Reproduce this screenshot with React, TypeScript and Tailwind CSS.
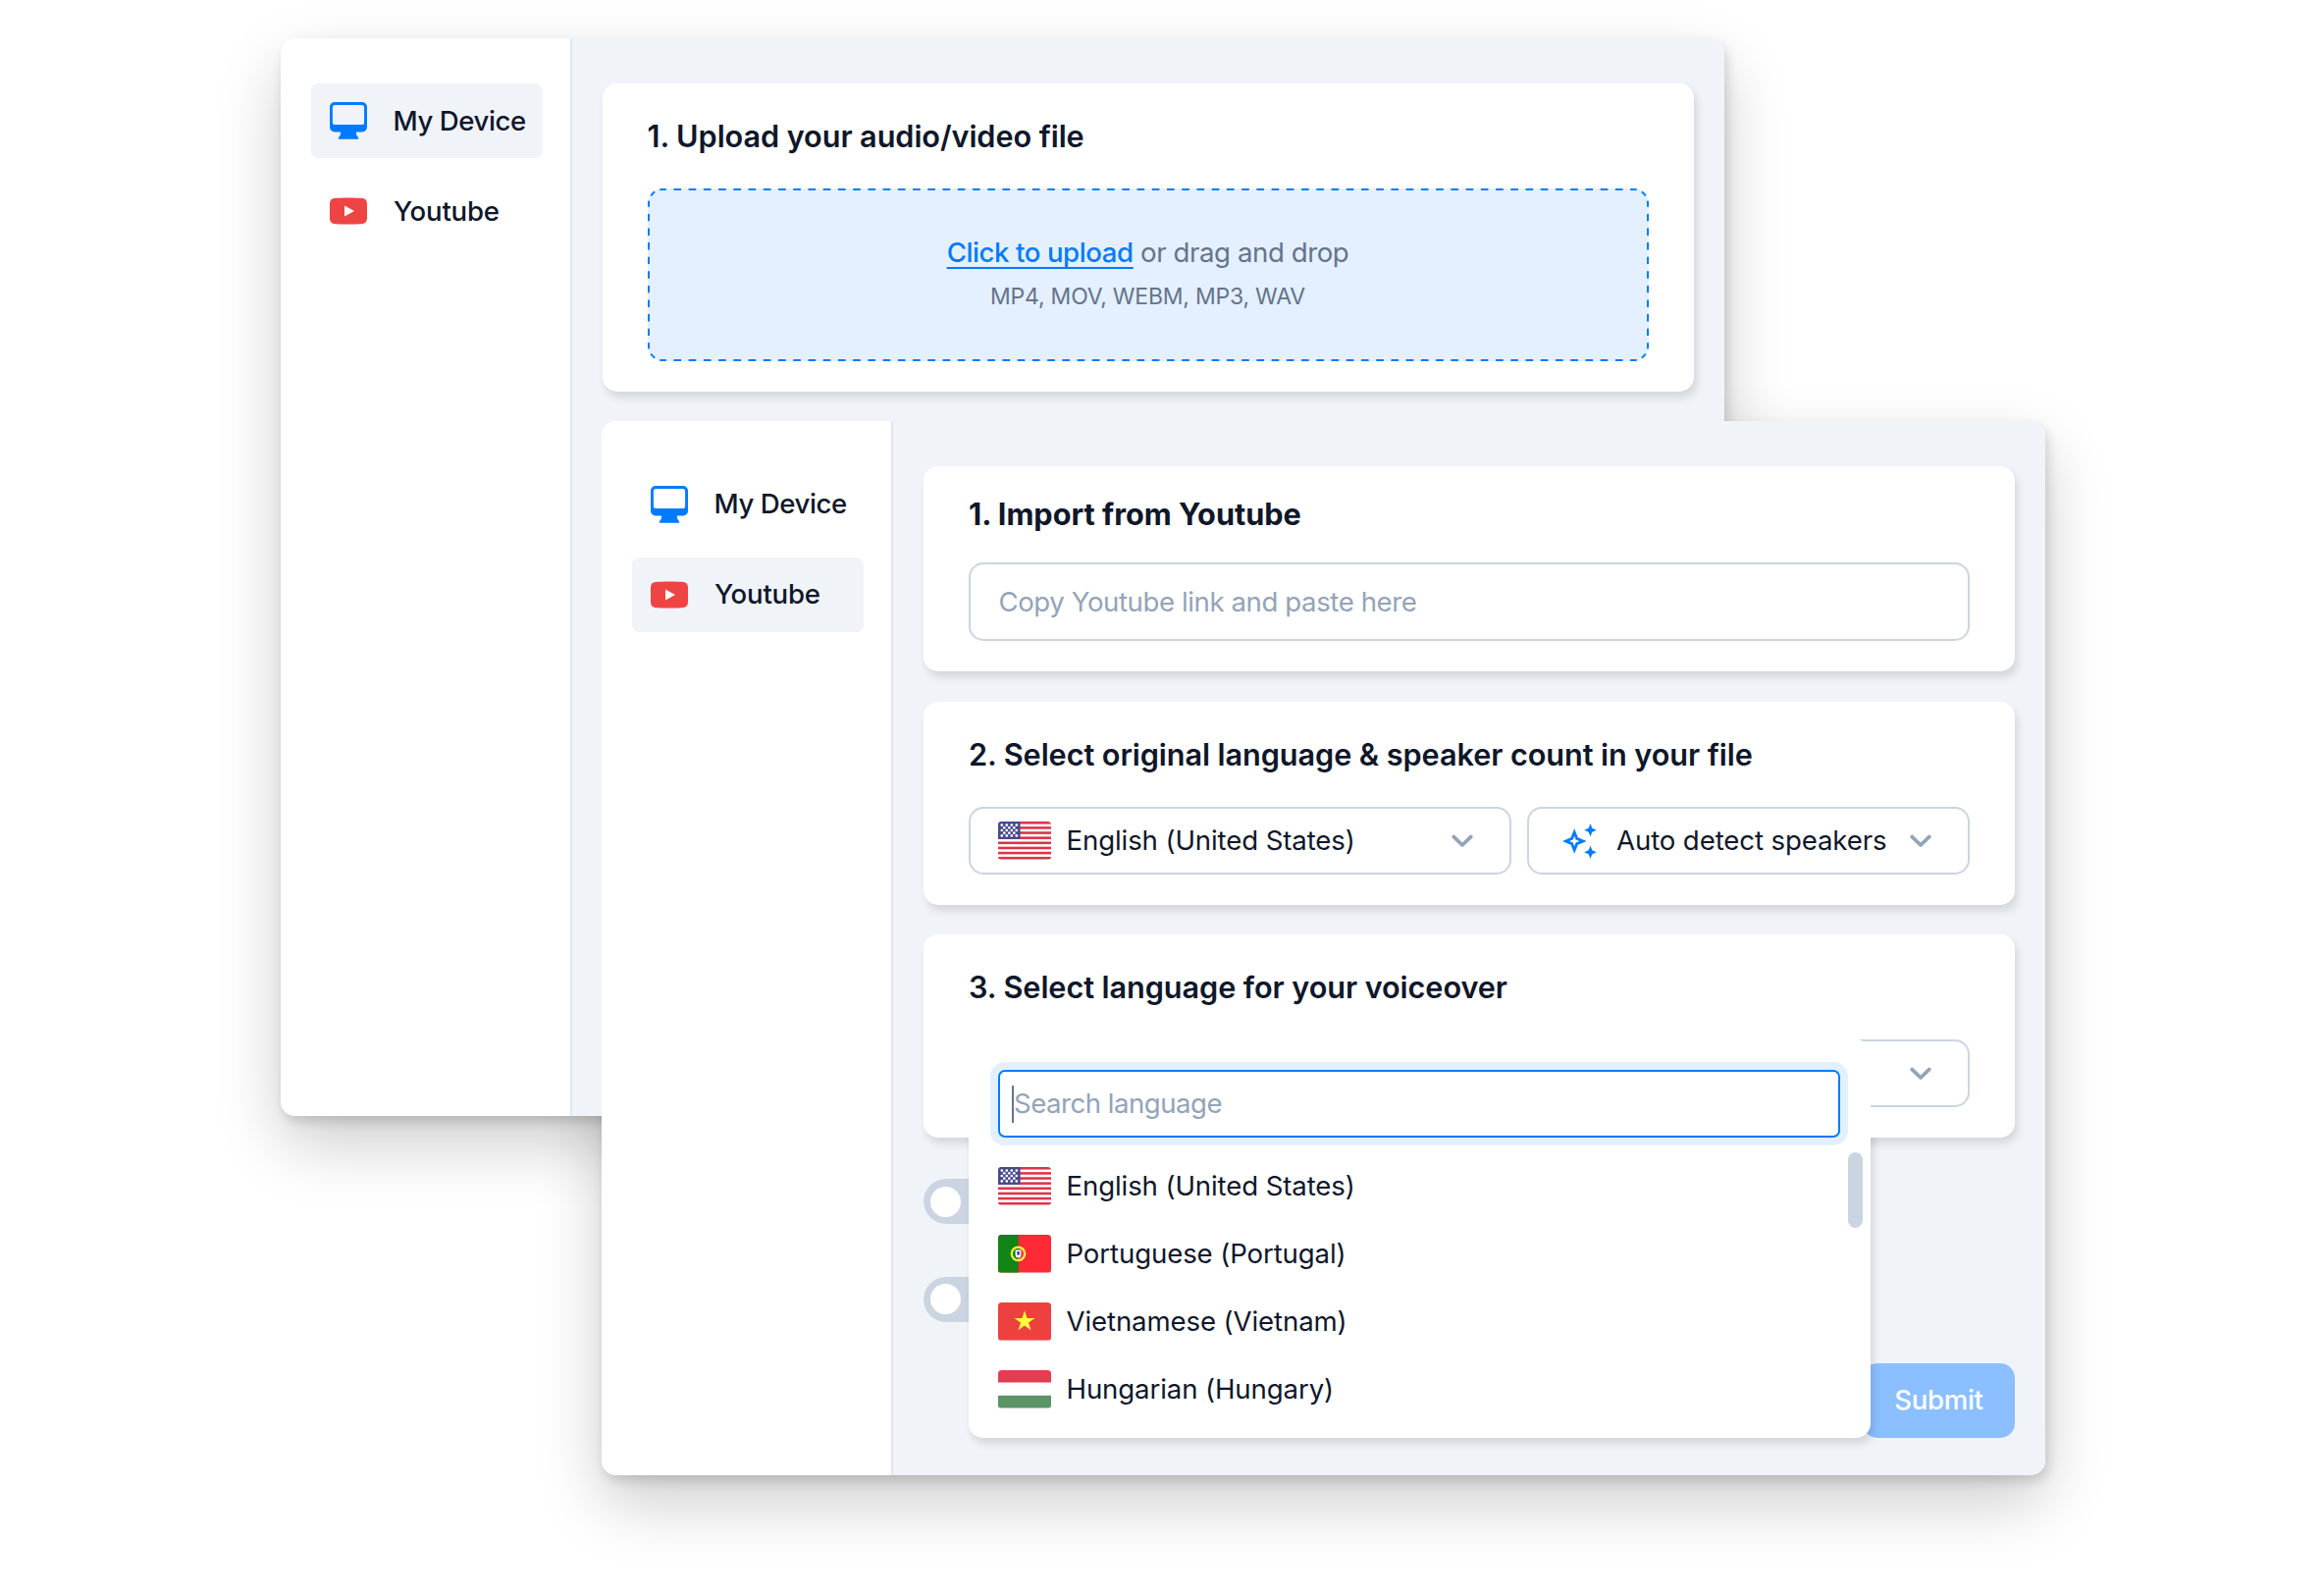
import React from "react";

function MonitorIcon() {
  return (
    <svg viewBox="0 0 38 38" className="size-[38px] shrink-0">
      <path
        fill="#007bff"
        fillRule="evenodd"
        d="M5 0H33A5 5 0 0 1 38 5V25.5A5 5 0 0 1 33 30.5H27C26.6 32.6 27.2 34 28.6 35.4C29.8 36.6 29.3 37.8 28 37.8H10C8.700 37.8 8.200 36.6 9.400 35.4C10.800 34 11.400 32.6 11 30.5H5A5 5 0 0 1 0 25.500V5A5 5 0 0 1 5 0ZM5.500 2.900A2.600 2.600 0 0 0 2.900 5.500V20.400A2.600 2.600 0 0 0 5.500 23H32.500A2.600 2.600 0 0 0 35.100 20.400V5.500A2.600 2.600 0 0 0 32.500 2.900Z"
      />
    </svg>
  );
}

function YoutubeIcon() {
  return (
    <svg viewBox="0 0 38 38" className="size-[38px] shrink-0">
      <path
        fill="#ef4444"
        d="M4.500 6C11 5.200 27 5.200 33.500 6C36 6.300 37.600 7.900 37.900 10.400C38.500 15.500 38.500 22.500 37.900 27.600C37.600 30.100 36 31.700 33.500 32C27 32.800 11 32.800 4.500 32C2 31.700 .4 30.100 .1 27.600C-.5 22.500 -.5 15.500 .1 10.400C.4 7.900 2 6.300 4.500 6Z"
      />
      <path fill="#fff" d="M15 13.400L25 19L15 24.600Z" />
    </svg>
  );
}

function Chevron() {
  return (
    <svg viewBox="0 0 22 14" className="h-[14px] w-[22px] shrink-0">
      <path d="M2.300 2.600L11 11L19.700 2.600" fill="none" stroke="#94a3b8" strokeWidth="3.800" strokeLinecap="round" strokeLinejoin="round" />
    </svg>
  );
}

function Sparkles() {
  return (
    <svg viewBox="0 0 35 36" className="h-9 w-[35px] shrink-0" fill="#007bff">
      <path
        fillRule="evenodd"
        d="M12.200 5.200L15.800 14.200L24.600 18L15.800 21.800L12.200 30.800L8.600 21.800L0 18L8.600 14.200ZM12.200 12.800L10.700 16.500L7 18L10.700 19.500L12.200 23.200L13.700 19.500L17.400 18L13.700 16.500Z"
      />
      <path d="M28.500 .2L30.300 4.700L34.800 6.700L30.300 8.700L28.500 13.200L26.700 8.700L22.200 6.700L26.700 4.700Z" />
      <path d="M28.500 22.800L30.300 27.300L34.800 29.300L30.300 31.300L28.500 35.800L26.700 31.300L22.200 29.300L26.700 27.300Z" />
    </svg>
  );
}

const redStripes = [0, 2, 4, 6, 8, 10, 12, 14];
const starRows = [
  { y: 3.6, xs: [3.8, 8.8, 13.8, 18.8] },
  { y: 6.3, xs: [6.3, 11.3, 16.3] },
  { y: 9, xs: [3.8, 8.8, 13.8, 18.8] },
  { y: 11.7, xs: [6.3, 11.3, 16.3] },
  { y: 14.4, xs: [3.8, 8.8, 13.8, 18.8] },
];

type Country = "us" | "pt" | "vn" | "hu";

function Flag({ country }: { country: Country }) {
  return (
    <svg viewBox="0 0 54 38.5" className="h-[38.5px] w-[54px] shrink-0 rounded-[3.500px]">
      {country === "us" && (
        <>
          <rect width="54" height="38.5" fill="#fff" />
          {redStripes.map((n) => (
            <rect key={n} y={n * 2.567} width="54" height="2.567" fill="#db3548" />
          ))}
          <rect width="22.6" height="18" fill="#494a8b" />
          {starRows.map((row) => row.xs.map((x) => <circle key={`${x}-${row.y}`} cx={x} cy={row.y} r="1.350" fill="#fff" />))}
        </>
      )}
      {country === "pt" && (
        <>
          <rect width="54" height="38.5" fill="#ff2a36" />
          <rect width="20.8" height="38.5" fill="#128415" />
          <circle cx="20.500" cy="19.300" r="6.700" fill="none" stroke="#fdee45" strokeWidth="2.400" />
          <path d="M20.500 13.800A5.500 5.500 0 0 0 20.500 24.800Z" fill="#128415" />
          <path d="M17.600 15.500H23.400V20A2.900 3.600 0 0 1 17.600 20Z" fill="#fff" />
          <path d="M19.300 17H21.900V19.500A1.300 1.500 0 0 1 19.300 19.500Z" fill="#1d4fc4" />
        </>
      )}
      {country === "vn" && (
        <>
          <rect width="54" height="38.5" fill="#ee403f" />
          <path d="M27 8.300L29.500 15.900H37.500L31 20.600L33.500 28.200L27 23.500L20.500 28.200L23 20.600L16.500 15.900H24.500Z" fill="#ffff45" />
        </>
      )}
      {country === "hu" && (
        <>
          <rect width="54" height="38.5" fill="#fff" />
          <rect width="54" height="12.500" fill="#e23e53" />
          <rect y="25.800" width="54" height="12.700" fill="#5b9467" />
        </>
      )}
    </svg>
  );
}

/** Dashed outline whose dashes are centred on the ends of every side. */
function DashedOutline() {
  const side = { strokeDasharray: "7.600 7.630", strokeDashoffset: 3.8 };
  const upright = { strokeDasharray: "7.400 7.200", strokeDashoffset: 3.7 };
  const corner = { strokeDasharray: "5.600 5.500", strokeDashoffset: 2.8 };
  return (
    <svg viewBox="0 0 1020 176" className="absolute inset-0 h-full w-full" fill="none" stroke="#007bff" strokeWidth="2">
      <path d="M15 1H1005" {...side} />
      <path d="M15 175H1005" {...side} />
      <path d="M1 15V161" {...upright} />
      <path d="M1019 15V161" {...upright} />
      <path d="M15 1A14 14 0 0 0 1 15" {...corner} />
      <path d="M1005 1A14 14 0 0 1 1019 15" {...corner} />
      <path d="M15 175A14 14 0 0 1 1 161" {...corner} />
      <path d="M1005 175A14 14 0 0 0 1019 161" {...corner} />
    </svg>
  );
}

function Sidebar({ active, className }: { active: "device" | "youtube"; className: string }) {
  const item = "flex h-[76px] items-center rounded-[7px] pl-[19px] text-[27.6px] font-medium";
  return (
    <nav className={`flex w-[297px] shrink-0 flex-col gap-4 rounded-l-[15px] border-r-2 border-[#e2e8f0] bg-white pl-[31px] pr-[28.500px] ${className}`}>
      <div className={`${item} gap-[26.500px] tracking-[-0.016em] ${active === "device" ? "bg-[#f0f4f9]" : ""}`}>
        <MonitorIcon />
        <span className="whitespace-nowrap pt-px">My Device</span>
      </div>
      <div className={`${item} gap-[27px] tracking-[-0.008em] ${active === "youtube" ? "bg-[#f0f4f9]" : ""}`}>
        <YoutubeIcon />
        <span className="pt-px">Youtube</span>
      </div>
    </nav>
  );
}

const card = "rounded-[15px] bg-white px-[46px] shadow-[3px_6px_8px_rgba(0,0,0,0.12)]";
const heading = "text-[30.67px] font-semibold leading-[46px] tracking-[-0.0025em]";
const select =
  "flex h-[69px] items-center rounded-[15px] border-2 border-[#cbd5e1] bg-white text-[27.6px] tracking-[-0.004em]";
const windowShadow =
  "absolute inset-0 -z-10 rounded-[15px] shadow-[3px_6px_12px_rgba(0,0,0,0.14),0_28px_66px_rgba(0,0,0,0.2)]";

const languages: { country: Country; name: string }[] = [
  { country: "us", name: "English (United States)" },
  { country: "pt", name: "Portuguese (Portugal)" },
  { country: "vn", name: "Vietnamese (Vietnam)" },
  { country: "hu", name: "Hungarian (Hungary)" },
];

function LanguageMenu() {
  return (
    <div className="absolute left-[46px] top-[107px] h-[406px] w-[919px] rounded-[15px] rounded-tl-none bg-white pl-[30px] pt-[31px]">
      <div className="flex h-[69px] w-[858px] items-center rounded-[7px] border-2 border-[#007bff] bg-white pl-3 text-[27.6px] tracking-[-0.018em] text-[#94a3b8] ring-8 ring-[#e3f0ff]">
        <span className="h-[38px] w-[2px] bg-[#64748b]" />
        <span>Search language</span>
      </div>
      <div className="mt-[15px] flex w-[881px] justify-between">
        <ul>
          {languages.map((l) => (
            <li key={l.name} className="flex h-[69px] items-center gap-[15.500px] text-[27.6px] tracking-[-0.004em]">
              <Flag country={l.country} />
              {l.name}
            </li>
          ))}
        </ul>
        <div className="h-[77px] w-[15px] rounded-full bg-[#cbd5e1]" />
      </div>
    </div>
  );
}

function Toggle() {
  return (
    <div className="flex h-[46px] w-[85px] items-center rounded-full bg-[#cbd5e1] pl-[7px]">
      <div className="size-[31px] rounded-full bg-white" />
    </div>
  );
}

function DeviceWindow() {
  return (
    <section className="absolute left-[286px] top-[39px] h-[1098px] w-[1471px]">
      <div className={windowShadow} />
      <div className="isolate flex h-full rounded-[15px] bg-[#f0f4f9]">
        <Sidebar active="device" className="pt-[46px]" />
        <main className="flex-1 pl-[30.500px] pr-[31px] pt-[45.500px]">
          <div className={`${card} flex h-[314px] flex-col pt-[31px]`}>
            <h2 className={`${heading} h-[46px]`}>1. Upload your audio/video file</h2>
            <div className="relative mt-[30.500px] flex h-[176px] w-[1020px] flex-col items-center justify-center rounded-[15px] bg-[#e4f0ff] text-[#64748b]">
              <DashedOutline />
              <p className="h-[45px] text-[27.6px] leading-[45px] tracking-[-0.015em]">
                <span className="font-medium text-[#007bff] underline decoration-2 underline-offset-[5px] [text-decoration-skip-ink:none]">
                  Click to upload
                </span>{" "}
                or drag and drop
              </p>
              <p className="h-[45px] text-[23px] leading-[45px] tracking-[-0.0095em]">MP4, MOV, WEBM, MP3, WAV</p>
            </div>
          </div>
        </main>
      </div>
    </section>
  );
}

function YoutubeWindow() {
  return (
    <section className="absolute left-[613px] top-[429px] h-[1074px] w-[1471px]">
      <div className={windowShadow} />
      <div className="isolate flex h-full rounded-[15px] bg-[#f0f4f9]">
        <Sidebar active="youtube" className="pt-[46.500px]" />
        <main className="flex flex-1 flex-col gap-[30.500px] pl-[31px] pr-[31px] pt-[46px]">
          <div className={`${card} h-[209px] pt-[26px]`}>
            <h2 className="text-[30.67px] font-bold leading-[46px]">1. Import from Youtube</h2>
            <div className="mt-[26px] flex h-20 w-[1020px] items-center rounded-[15px] border-2 border-[#cbd5e1] pl-[28.500px] pt-px text-[27.6px] tracking-[-0.015em] text-[#94a3b8]">
              Copy Youtube link and paste here
            </div>
          </div>
          <div className={`${card} h-[207px] pt-[31px]`}>
            <h2 className={heading}>2. Select original language &amp; speaker count in your file</h2>
            <div className="mt-[30.500px] flex w-[1020px] gap-4">
              <div className={`${select} w-[553px] gap-[15.500px] pl-7 pr-[37px]`}>
                <Flag country="us" />
                <span className="flex-1">English (United States)</span>
                <Chevron />
              </div>
              <div className={`${select} w-[451px] pl-[34px] pr-[37px]`}>
                <Sparkles />
                <span className="ml-5 flex-1">Auto detect speakers</span>
                <Chevron />
              </div>
            </div>
          </div>
          <div className={`${card} relative h-[207px] pt-[31px]`}>
            <h2 className={heading}>3. Select language for your voiceover</h2>
            <div className="mt-[30px] w-[1020px]">
              <div className={`${select} justify-end pr-[37px]`}>
                <Chevron />
              </div>
            </div>
            <div className="absolute left-[46px] top-[107px] -z-10 h-[406px] w-[919px] rounded-[15px] shadow-[3px_6px_8px_rgba(0,0,0,0.12)]" />
            <LanguageMenu />
          </div>
          <div className="relative -z-20 mt-[11.500px] flex h-[264px] items-end justify-between">
            <div className="flex h-full flex-col gap-[53.500px]">
              <Toggle />
              <Toggle />
            </div>
            <button className="h-[76.500px] w-[155px] rounded-[15px] bg-[#8bbfff] text-[27.6px] font-medium tracking-[-0.012em] text-white">
              Submit
            </button>
          </div>
        </main>
      </div>
    </section>
  );
}

export default function App() {
  return (
    <div className="relative isolate h-[1623px] w-[2368px] overflow-hidden bg-white font-['Inter',sans-serif] text-[#0f172a]">
      <DeviceWindow />
      <YoutubeWindow />
    </div>
  );
}
